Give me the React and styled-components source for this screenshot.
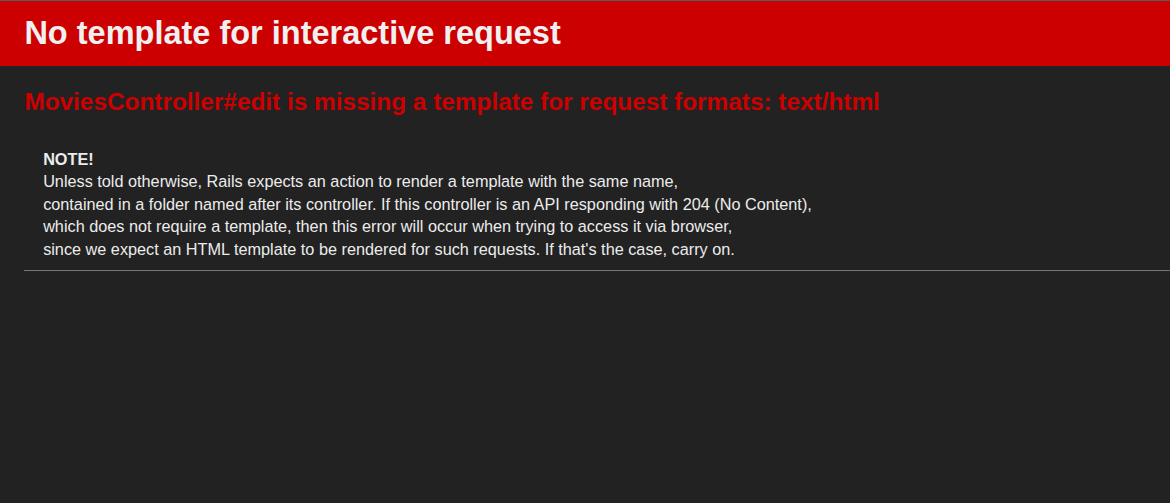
import React from 'react';
import styled, { createGlobalStyle } from 'styled-components';

// page is shown at 125% of the stock rails error page sizes
const GlobalStyle = createGlobalStyle`
  html, body {
    margin: 0;
    padding: 0;
    background-color: #222;
  }
  body {
    color: #ececec;
    font-family: "Liberation Sans", Arial, sans-serif;
    font-size: 16.25px;
    line-height: 22.5px;
    border-top: 1px solid #5a5a5a;
  }
`;

const Header = styled.header`
  color: #f0f0f0;
  background: #c00;
  padding: 8.125px 24.375px;
`;

const Title = styled.h1`
  margin: 6.5px 0;
  font-size: 32.5px;
  line-height: 35.75px;
  font-weight: bold;
`;

const Container = styled.main`
  padding-left: 24.375px;
  overflow: hidden;
`;

const Message = styled.h2`
  color: #c00;
  font-size: 24.375px;
  line-height: 31.25px;
  margin: 20.2px 0;
  font-weight: bold;
`;

const Summary = styled.p`
  margin: 0;
  padding: 10px 18.75px;
  border-bottom: 1px solid #777;
`;

const App = () => (
  <>
    <GlobalStyle />
    <Header>
      <Title>No template for interactive request</Title>
    </Header>
    <Container>
      <Message>MoviesController#edit is missing a template for request formats: text/html</Message>
      <Summary>
        <strong>NOTE!</strong>
        <br />
        Unless told otherwise, Rails expects an action to render a template with the same name,
        <br />
        contained in a folder named after its controller. If this controller is an API responding with 204 (No Content),
        <br />
        which does not require a template, then this error will occur when trying to access it via browser,
        <br />
        since we expect an HTML template to be rendered for such requests. If that&apos;s the case, carry on.
      </Summary>
    </Container>
  </>
);

export default App;
